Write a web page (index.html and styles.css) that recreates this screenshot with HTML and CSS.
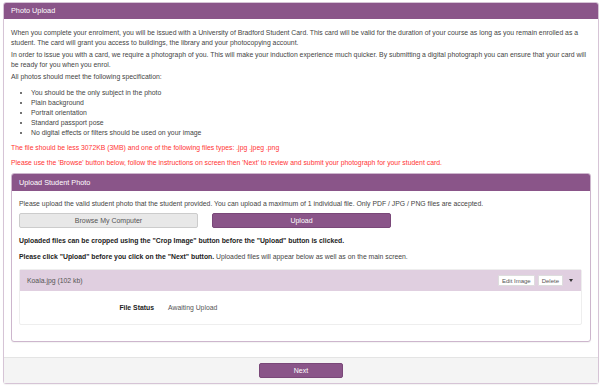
FILE: index.html
```
<!DOCTYPE html>
<html lang="en">
<head>
  <meta charset="UTF-8">
  <meta name="viewport" content="width=device-width, initial-scale=1.0">
  <title>Photo Upload</title>
  <link rel="stylesheet" href="styles.css">
</head>
<body>
  <div class="panel">
    <div class="panel-heading">Photo Upload</div>

    <div class="panel-body">
      <p>When you complete your enrolment, you will be issued with a University of Bradford Student Card. This card will be valid for the duration of your course as long as you remain enrolled as a student. The card will grant you access to buildings, the library and your photocopying account.</p>
      <p>In order to issue you with a card, we require a photograph of you. This will make your induction experience much quicker. By submitting a digital photograph you can ensure that your card will be ready for you when you enrol.</p>
      <p>All photos should meet the following specification:</p>
      <ul class="spec">
        <li>You should be the only subject in the photo</li>
        <li>Plain background</li>
        <li>Portrait orientation</li>
        <li>Standard passport pose</li>
        <li>No digital effects or filters should be used on your image</li>
      </ul>
      <p class="warn">The file should be less 3072KB (3MB) and one of the following files types: .jpg .jpeg .png</p>
      <p class="warn">Please use the 'Browse' button below, follow the instructions on screen then 'Next' to review and submit your photograph for your student card.</p>

      <div class="panel inner">
        <div class="panel-heading">Upload Student Photo</div>
        <div class="panel-body">
          <p>Please upload the valid student photo that the student provided. You can upload a maximum of 1 individual file. Only PDF / JPG / PNG files are accepted.</p>

          <div class="upload-row">
            <button class="btn btn-default">Browse My Computer</button>
            <button class="btn btn-primary">Upload</button>
          </div>

          <p class="strong">Uploaded files can be cropped using the "Crop Image" button before the "Upload" button is clicked.</p>
          <p class="notice"><strong>Please click "Upload" before you click on the "Next" button.</strong> Uploaded files will appear below as well as on the main screen.</p>

          <div class="file-box">
            <div class="file-head">
              <span>Koala.jpg (102 kb)</span>
              <div class="file-actions">
                <button class="btn-xs">Edit Image</button>
                <button class="btn-xs">Delete</button>
                <span class="caret"></span>
              </div>
            </div>
            <div class="file-body">
              <span class="label">File Status</span>
              <span class="value">Awaiting Upload</span>
            </div>
          </div>
        </div>
      </div>
    </div>

    <div class="panel-footer">
      <button class="btn btn-primary btn-next">Next</button>
    </div>
  </div>
</body>
</html>
```

FILE: styles.css
```
body {
  margin: 0;
  padding: 2px 3px;
  font-family: "Liberation Sans", Arial, sans-serif;
  font-size: 6.85px;
  line-height: 10px;
  color: #444;
  background: #fff;
}
.panel {
  border: 1px solid #d6c4d6;
  border-radius: 3px;
  background: #fff;
  box-shadow: 0 1px 1px rgba(0,0,0,0.05);
}
.panel-heading {
  background: #8a5589;
  color: #fff;
  height: 16px;
  line-height: 16px;
  padding: 0 7px;
  border-radius: 2px 2px 0 0;
  font-size: 7.3px;
}
.panel-body {
  padding: 9px 7px 15px;
}
p {
  margin: 0 0 2px;
}
.spec {
  margin: 6px 0 5px;
  padding-left: 20px;
}
.warn {
  color: #f33;
  margin-bottom: 5px;
}
.inner {
  margin-top: 4px;
  border-color: #cdb6cd;
}
.inner .panel-heading {
  height: 17px;
  line-height: 17px;
}
.inner .panel-body {
  padding: 8px 7px 16px;
}
.upload-row {
  display: grid;
  grid-template-columns: 179px 179px;
  gap: 14px;
  margin: 4px 0 8px;
}
.btn {
  height: 15px;
  padding: 0;
  font-family: inherit;
  font-size: 7px;
  border-radius: 2px;
  cursor: pointer;
}
.btn-default {
  background: #e8e8e8;
  border: 1px solid #ccc;
  color: #555;
}
.btn-primary {
  background: #8a5589;
  border: 1px solid #7a4879;
  color: #fff;
}
.strong {
  font-weight: bold;
  color: #222;
  margin-bottom: 6px;
}
.notice {
  margin-bottom: 7px;
}
.notice strong {
  color: #222;
}
.file-box {
  margin-right: 1px;
  border: 1px solid #eee;
  border-radius: 2px;
}
.file-head {
  display: flex;
  align-items: center;
  justify-content: space-between;
  height: 21px;
  padding: 0 8px 0 7px;
  background: #e0cfe0;
  color: #555;
}
.file-actions {
  display: flex;
  align-items: center;
  gap: 3px;
}
.btn-xs {
  height: 11px;
  padding: 0 3px;
  background: #fff;
  border: 1px solid #ddd;
  border-radius: 1px;
  font-family: inherit;
  font-size: 6px;
  color: #555;
}
.caret {
  margin-left: 3px;
  width: 0;
  height: 0;
  border-left: 2px solid transparent;
  border-right: 2px solid transparent;
  border-top: 3px solid #333;
}
.file-body {
  display: flex;
  align-items: center;
  height: 33px;
}
.label {
  width: 134px;
  text-align: right;
  font-weight: bold;
  color: #222;
}
.value {
  margin-left: 14px;
  color: #555;
}
.panel-footer {
  display: flex;
  justify-content: center;
  padding: 5px 0;
  background: #f4f4f4;
  border-top: 1px solid #e4e4e4;
}
.btn-next {
  width: 84px;
}
```
